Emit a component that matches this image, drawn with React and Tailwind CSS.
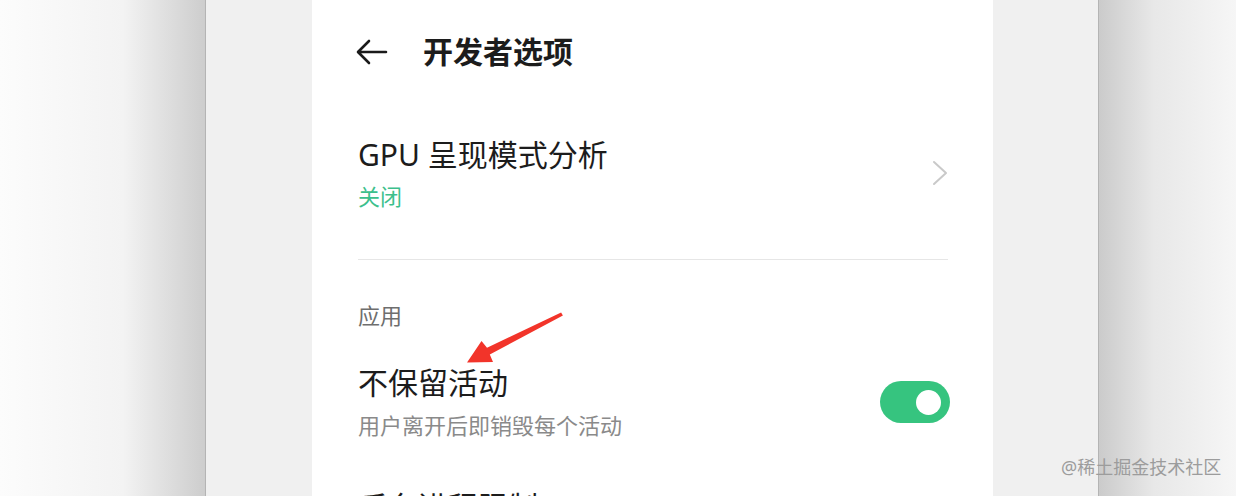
import React from 'react';

const cjk = { fontFamily: '"Noto Sans", "Noto Sans CJK SC", sans-serif' };

// 开关
const Toggle = () => (
  <div className="w-[70px] h-[42px] rounded-full bg-[#36c47f] flex items-center justify-end pr-[9px] mr-[-2px]">
    <div className="w-[25px] h-[25px] rounded-full bg-white" />
  </div>
);

const App = () => {
  return (
    <div className="relative w-[1236px] h-[496px] flex overflow-hidden bg-white" style={cjk}>
      {/* 左侧阴影 */}
      <div className="w-[205px] h-full bg-linear-to-r from-[#fcfcfc] via-[#f3f3f3] via-60% to-[#cdcdcd]" />
      <div className="w-px h-full bg-[#b4b4b4]" />
      <div className="w-[106px] h-full bg-[#f0f0f0]" />

      {/* 手机截图 */}
      <div className="w-[681px] h-full bg-white pl-[46px] pr-[45px] flex flex-col text-[#1c1c1c]">
        <div className="h-[104px] flex items-center shrink-0">
          <svg width="32" height="26" viewBox="0 0 32 26" className="ml-[-2px]" fill="none" stroke="#1a1a1a" strokeWidth="2.6" strokeLinecap="round" strokeLinejoin="round">
            <path d="M30 13H3M13 2L2 13l11 11" />
          </svg>
          <span className="ml-[35px] text-[30px] leading-[36px] font-bold">开发者选项</span>
        </div>

        <div className="mt-[33px] flex items-center shrink-0">
          <div className="flex-1 flex flex-col">
            <span className="text-[30px] leading-[36px]">GPU 呈现模式分析</span>
            <span className="mt-[9px] text-[22px] leading-[28px] text-[#3cbf8c]">关闭</span>
          </div>
          <svg width="16" height="26" viewBox="0 0 16 26" fill="none" stroke="#c9c9c9" strokeWidth="2" strokeLinecap="round" strokeLinejoin="round" className="mt-[-2px]">
            <path d="M2 2l12 11L2 24" />
          </svg>
        </div>

        <div className="mt-[49px] h-px bg-[#e6e6e6] shrink-0" />

        <span className="mt-[41px] text-[22px] leading-[28px] text-[#6e6e6e] shrink-0">应用</span>

        <div className="mt-[36px] flex items-center shrink-0">
          <div className="flex-1 flex flex-col">
            <span className="text-[30px] leading-[36px]">不保留活动</span>
            <span className="mt-[10px] text-[22px] leading-[28px] text-[#8a8a8a]">用户离开后即销毁每个活动</span>
          </div>
          <Toggle />
        </div>

        <span className="mt-[50px] text-[30px] leading-[36px] shrink-0">后台进程限制</span>
      </div>

      <div className="w-[105px] h-full bg-[#f0f0f0]" />
      <div className="w-px h-full bg-[#b4b4b4]" />
      <div className="flex-1 h-full bg-linear-to-r from-[#cbcbcb] via-[#e8e8e8] via-40% to-[#f6f6f6]" />

      {/* 红色标注箭头 */}
      <svg className="absolute left-0 top-0 pointer-events-none" width="1236" height="496" viewBox="0 0 1236 496">
        <polygon
          fill="#f2342a"
          points="562.9,315.6 561.1,312.4 487.0,347.8 481.5,341.0 467,362.5 493.0,362.0 489.8,354.4"
        />
      </svg>

      {/* 水印 */}
      <span className="absolute left-[1061px] top-[455px] text-[18px] leading-[24px] text-[#9c9c9c]">@稀土掘金技术社区</span>
    </div>
  );
};

export default App;
